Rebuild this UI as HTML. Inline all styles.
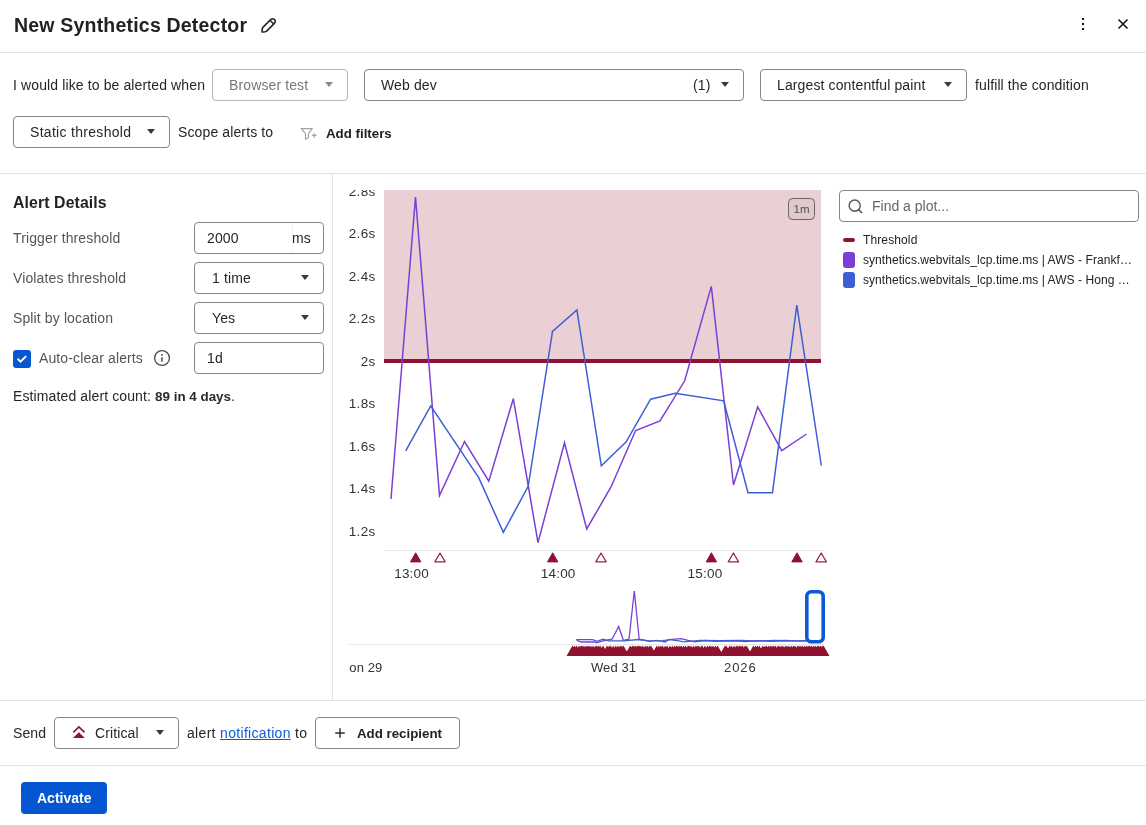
<!DOCTYPE html>
<html><head><meta charset="utf-8">
<style>
*{box-sizing:border-box;margin:0;padding:0}
html,body{width:1146px;height:825px;overflow:hidden;background:#fff}
body{will-change:transform}
body{position:relative;font-family:"Liberation Sans",sans-serif;color:#262626;font-size:14px;letter-spacing:0.12px}
.a{position:absolute;white-space:nowrap;line-height:20px}
.box{position:absolute;border:1px solid #858585;border-radius:4px;background:#fff}
.hr{position:absolute;left:0;width:1146px;height:1px;background:#e3e3e3}
.caret{position:absolute;width:0;height:0;border-left:4px solid transparent;border-right:4px solid transparent;border-top:5px solid #3a3a3a;margin-left:1px;margin-top:-1px}
.lbl{color:#555}
.b{font-weight:bold}
</style></head><body>

<!-- header -->
<div class="a b" style="left:14px;top:13px;font-size:19.5px;line-height:24px;color:#222;letter-spacing:0.2px">New Synthetics Detector</div>
<svg style="position:absolute;left:259px;top:15px" width="20" height="20" viewBox="0 0 20 20">
  <path d="M3.6 12.6 L11.6 4.6 Q13.6 2.9 15.5 4.6 Q17.2 6.5 15.4 8.4 L7.4 16.4 Q5.4 17.4 3.1 17 Q2.7 14.6 3.6 12.6 Z M11 5.3 L14.7 9" fill="none" stroke="#222" stroke-width="1.5" stroke-linejoin="round"/>
</svg>
<div style="position:absolute;left:1082px;top:18px;width:2px;height:2px;background:#111"></div>
<div style="position:absolute;left:1082px;top:23px;width:2px;height:2px;background:#111"></div>
<div style="position:absolute;left:1082px;top:28px;width:2px;height:2px;background:#111"></div>
<svg style="position:absolute;left:1116px;top:17px" width="14" height="14" viewBox="0 0 14 14">
  <path d="M2.5 2.5 L11.5 11.5 M11.5 2.5 L2.5 11.5" stroke="#111" stroke-width="1.5"/>
</svg>
<div class="hr" style="top:52px"></div>

<!-- row 1 -->
<div class="a" style="left:13px;top:75px">I would like to be alerted when</div>
<div class="box" style="left:212px;top:69px;width:136px;height:32px;border-color:#b8b8b8"></div>
<div class="a" style="left:229px;top:75px;color:#787878">Browser test</div>
<div class="caret" style="left:324px;top:83px;border-top-color:#8a8a8a"></div>

<div class="box" style="left:364px;top:69px;width:380px;height:32px"></div>
<div class="a" style="left:381px;top:75px">Web dev</div>
<div class="a" style="left:693px;top:75px">(1)</div>
<div class="caret" style="left:720px;top:83px"></div>

<div class="box" style="left:760px;top:69px;width:207px;height:32px"></div>
<div class="a" style="left:777px;top:75px">Largest contentful paint</div>
<div class="caret" style="left:943px;top:83px"></div>
<div class="a" style="left:975px;top:75px">fulfill the condition</div>

<!-- row 2 -->
<div class="box" style="left:13px;top:116px;width:157px;height:32px"></div>
<div class="a" style="left:30px;top:122px;letter-spacing:0.3px">Static threshold</div>
<div class="caret" style="left:146px;top:130px"></div>
<div class="a" style="left:178px;top:122px">Scope alerts to</div>
<svg style="position:absolute;left:299px;top:126px" width="20" height="16" viewBox="0 0 20 16">
  <path d="M2.3 2.7 H13.3 L9.5 7.7 V11.6 L6.5 13.3 V7.7 Z" fill="none" stroke="#a3a3a3" stroke-width="1.2" stroke-linejoin="round"/>
  <path d="M12.9 9.4 H17.5 M15.2 7.1 V11.7" stroke="#a3a3a3" stroke-width="1.2"/>
</svg>
<div class="a b" style="left:326px;top:124px;color:#222;font-size:13.3px;letter-spacing:0">Add filters</div>
<div class="hr" style="top:173px"></div>

<!-- left panel -->
<div style="position:absolute;left:332px;top:173px;width:1px;height:527px;background:#e3e3e3"></div>
<div class="a b" style="left:13px;top:193px;font-size:15.8px;color:#222">Alert Details</div>

<div class="a lbl" style="left:13px;top:228px">Trigger threshold</div>
<div class="box" style="left:194px;top:222px;width:130px;height:32px"></div>
<div class="a" style="left:207px;top:228px">2000</div>
<div style="position:absolute;left:292px;top:223px;width:1px;height:30px;background:#f3f3f3"></div>
<div class="a" style="left:292px;top:228px">ms</div>

<div class="a lbl" style="left:13px;top:268px">Violates threshold</div>
<div class="box" style="left:194px;top:262px;width:130px;height:32px"></div>
<div class="a" style="left:212px;top:268px">1 time</div>
<div class="caret" style="left:300px;top:276px"></div>

<div class="a lbl" style="left:13px;top:308px">Split by location</div>
<div class="box" style="left:194px;top:302px;width:130px;height:32px"></div>
<div class="a" style="left:212px;top:308px">Yes</div>
<div class="caret" style="left:300px;top:316px"></div>

<div style="position:absolute;left:13px;top:350px;width:18px;height:18px;border-radius:3px;background:#0757d2"></div>
<svg style="position:absolute;left:13px;top:350px" width="18" height="18" viewBox="0 0 18 18"><path d="M4.6 8.8 L7.5 11.6 L13.2 6.1" fill="none" stroke="#fff" stroke-width="2"/></svg>
<div class="a lbl" style="left:39px;top:348px">Auto-clear alerts</div>
<svg style="position:absolute;left:153px;top:349px" width="18" height="18" viewBox="0 0 18 18">
  <circle cx="9" cy="9" r="7.4" fill="none" stroke="#4a4a4a" stroke-width="1.3"/>
  <circle cx="9" cy="5.9" r="0.95" fill="#4a4a4a"/>
  <path d="M9 8.2 V12.7" stroke="#4a4a4a" stroke-width="1.5"/>
</svg>
<div class="box" style="left:194px;top:342px;width:130px;height:32px"></div>
<div class="a" style="left:207px;top:348px">1d</div>

<div class="a" style="left:13px;top:386px">Estimated alert count: <b style="color:#2a2a2a;font-size:13.4px;letter-spacing:0">89 in 4 days</b>.</div>

<!-- legend -->
<div class="box" style="left:839px;top:190px;width:300px;height:32px"></div>
<svg style="position:absolute;left:846px;top:197px" width="18" height="18" viewBox="0 0 18 18">
  <circle cx="8.7" cy="8.6" r="5.6" fill="none" stroke="#555" stroke-width="1.4"/>
  <path d="M12.6 12.6 L16 16" stroke="#555" stroke-width="1.6"/>
</svg>
<div class="a" style="left:872px;top:196px;color:#666;letter-spacing:0">Find a plot...</div>
<div style="position:absolute;left:843px;top:238px;width:12px;height:4px;border-radius:2px;background:#8f1230"></div>
<div class="a" style="left:863px;top:230px;font-size:12px;color:#222">Threshold</div>
<div style="position:absolute;left:843px;top:252px;width:12px;height:16px;border-radius:3px;background:#7b3fd7"></div>
<div class="a" style="left:863px;top:250px;font-size:12px;color:#222;letter-spacing:0.06px">synthetics.webvitals_lcp.time.ms | AWS - Frankf…</div>
<div style="position:absolute;left:843px;top:272px;width:12px;height:16px;border-radius:3px;background:#3e5fd3"></div>
<div class="a" style="left:863px;top:270px;font-size:12px;color:#222;letter-spacing:0.06px">synthetics.webvitals_lcp.time.ms | AWS - Hong …</div>

<!-- chart svg -->
<svg style="position:absolute;left:0;top:0" width="1146" height="825" viewBox="0 0 1146 825">
  <defs><clipPath id="cp"><rect x="333" y="190" width="500" height="400"/></clipPath></defs>
  <rect x="384" y="190" width="437" height="170" fill="#eacfd4"/>
  <rect x="384" y="359" width="437" height="4" fill="#8f1230"/>
  <rect x="384" y="550" width="439" height="1" fill="#e6e6e6"/>
  <g font-family="Liberation Sans" font-size="13.5" letter-spacing="0.35" fill="#333" text-anchor="end" clip-path="url(#cp)">
    <text x="375.6" y="195.6">2.8s</text>
    <text x="375.6" y="238">2.6s</text>
    <text x="375.6" y="280.6">2.4s</text>
    <text x="375.6" y="323">2.2s</text>
    <text x="375.6" y="365.6">2s</text>
    <text x="375.6" y="408">1.8s</text>
    <text x="375.6" y="450.6">1.6s</text>
    <text x="375.6" y="493">1.4s</text>
    <text x="375.6" y="535.6">1.2s</text>
  </g>
  <g font-family="Liberation Sans" font-size="13.5" letter-spacing="0.2" fill="#333" text-anchor="middle">
    <text x="411.6" y="577.7">13:00</text>
    <text x="558.2" y="577.7">14:00</text>
    <text x="705" y="577.7">15:00</text>
  </g>
  <!-- badge -->
  <rect x="788.5" y="198.5" width="26" height="21" rx="4" fill="#e2c7cc" stroke="#666" stroke-width="1"/>
  <text x="801.5" y="213.2" font-family="Liberation Sans" font-size="11.5" fill="#505050" text-anchor="middle">1m</text>
  <!-- series -->
  <polyline fill="none" stroke="#7b3fd7" stroke-width="1.5" stroke-linejoin="miter" points="391,499 415.5,197 439.5,495.6 464.5,441.5 488.8,481.2 513.3,398.7 538,542.6 564.5,442.7 586.7,529 611,487 635.6,430.5 660,421 684.7,380.8 711.3,286.4 733.5,485 757.7,406.9 781.7,450.7 806.6,434"/>
  <polyline fill="none" stroke="#3e5fd3" stroke-width="1.5" stroke-linejoin="miter" points="405.7,450.9 430.7,405.9 478.7,477.6 503.3,532.4 528.2,486.3 552.5,331.5 576.9,310 601.3,465.8 626,442 650.6,399.2 675.3,393.3 723.7,400.8 748,492.8 772.5,492.8 796.8,305.1 821.3,465.5"/>
  <!-- markers -->
  <g fill="#8f1230" stroke="#8f1230" stroke-width="1" stroke-linejoin="round">
    <path d="M410.5 561.9 L415.7 552.8 L420.9 561.9 Z"/>
    <path d="M547.5 561.9 L552.7 552.8 L557.9 561.9 Z"/>
    <path d="M706.2 561.9 L711.4 552.8 L716.6 561.9 Z"/>
    <path d="M791.8 561.9 L797 552.8 L802.2 561.9 Z"/>
  </g>
  <g fill="none" stroke="#9a2540" stroke-width="1.2" stroke-linejoin="round">
    <path d="M434.8 561.9 L440 553 L445.2 561.9 Z"/>
    <path d="M595.8 561.9 L601 553 L606.2 561.9 Z"/>
    <path d="M728.2 561.9 L733.4 553 L738.6 561.9 Z"/>
    <path d="M816 561.9 L821.2 553 L826.4 561.9 Z"/>
  </g>
  <!-- navigator -->
  <rect x="349" y="644" width="475" height="1" fill="#e6e6e6"/>
  <path d="M566.5 656L572.5 645.5L578.5 656ZM568.4 656L574.4 645.5L580.4 656ZM570.5 656L576.5 645.5L582.5 656ZM573.0 656L579.0 645.5L585.0 656ZM575.0 656L581.0 645.5L587.0 656ZM576.1 656L582.1 645.5L588.1 656ZM577.9 656L583.9 645.5L589.9 656ZM580.0 656L586.0 645.5L592.0 656ZM581.6 656L587.6 645.5L593.6 656ZM583.1 656L589.1 645.5L595.1 656ZM584.9 656L590.9 645.5L596.9 656ZM587.0 656L593.0 645.5L599.0 656ZM589.4 656L595.4 645.5L601.4 656ZM590.9 656L596.9 645.5L602.9 656ZM592.6 656L598.6 645.5L604.6 656ZM594.2 656L600.2 645.5L606.2 656ZM597.0 656L603.0 645.5L609.0 656ZM601.0 656L607.0 645.5L613.0 656ZM603.2 656L609.2 645.5L615.2 656ZM604.7 656L610.7 645.5L616.7 656ZM607.3 656L613.3 645.5L619.3 656ZM609.8 656L615.8 645.5L621.8 656ZM612.0 656L618.0 645.5L624.0 656ZM614.1 656L620.1 645.5L626.1 656ZM615.7 656L621.7 645.5L627.7 656ZM617.4 656L623.4 645.5L629.4 656ZM624.2 656L630.2 645.5L636.2 656ZM626.3 656L632.3 645.5L638.3 656ZM627.7 656L633.7 645.5L639.7 656ZM629.4 656L635.4 645.5L641.4 656ZM631.1 656L637.1 645.5L643.1 656ZM632.5 656L638.5 645.5L644.5 656ZM633.1 656L639.1 645.5L645.1 656ZM634.9 656L640.9 645.5L646.9 656ZM636.8 656L642.8 645.5L648.8 656ZM639.2 656L645.2 645.5L651.2 656ZM641.2 656L647.2 645.5L653.2 656ZM643.4 656L649.4 645.5L655.4 656ZM645.0 656L651.0 645.5L657.0 656ZM650.8 656L656.8 645.5L662.8 656ZM653.0 656L659.0 645.5L665.0 656ZM654.9 656L660.9 645.5L666.9 656ZM656.6 656L662.6 645.5L668.6 656ZM659.2 656L665.2 645.5L671.2 656ZM661.2 656L667.2 645.5L673.2 656ZM664.0 656L670.0 645.5L676.0 656ZM666.4 656L672.4 645.5L678.4 656ZM668.7 656L674.7 645.5L680.7 656ZM670.5 656L676.5 645.5L682.5 656ZM672.1 656L678.1 645.5L684.1 656ZM673.9 656L679.9 645.5L685.9 656ZM675.4 656L681.4 645.5L687.4 656ZM677.7 656L683.7 645.5L689.7 656ZM679.6 656L685.6 645.5L691.6 656ZM682.0 656L688.0 645.5L694.0 656ZM683.1 656L689.1 645.5L695.1 656ZM684.9 656L690.9 645.5L696.9 656ZM687.4 656L693.4 645.5L699.4 656ZM689.8 656L695.8 645.5L701.8 656ZM691.2 656L697.2 645.5L703.2 656ZM692.9 656L698.9 645.5L704.9 656ZM695.4 656L701.4 645.5L707.4 656ZM696.1 656L702.1 645.5L708.1 656ZM698.9 656L704.9 645.5L710.9 656ZM701.5 656L707.5 645.5L713.5 656ZM703.4 656L709.4 645.5L715.4 656ZM704.9 656L710.9 645.5L716.9 656ZM707.0 656L713.0 645.5L719.0 656ZM709.4 656L715.4 645.5L721.4 656ZM711.6 656L717.6 645.5L723.6 656ZM719.0 656L725.0 645.5L731.0 656ZM720.3 656L726.3 645.5L732.3 656ZM723.7 656L729.7 645.5L735.7 656ZM725.5 656L731.5 645.5L737.5 656ZM728.1 656L734.1 645.5L740.1 656ZM730.4 656L736.4 645.5L742.4 656ZM731.9 656L737.9 645.5L743.9 656ZM733.6 656L739.6 645.5L745.6 656ZM735.1 656L741.1 645.5L747.1 656ZM736.6 656L742.6 645.5L748.6 656ZM739.0 656L745.0 645.5L751.0 656ZM740.6 656L746.6 645.5L752.6 656ZM747.4 656L753.4 645.5L759.4 656ZM749.5 656L755.5 645.5L761.5 656ZM751.4 656L757.4 645.5L763.4 656ZM753.3 656L759.3 645.5L765.3 656ZM756.7 656L762.7 645.5L768.7 656ZM759.0 656L765.0 645.5L771.0 656ZM760.5 656L766.5 645.5L772.5 656ZM762.7 656L768.7 645.5L774.7 656ZM764.3 656L770.3 645.5L776.3 656ZM766.2 656L772.2 645.5L778.2 656ZM767.8 656L773.8 645.5L779.8 656ZM769.5 656L775.5 645.5L781.5 656ZM772.1 656L778.1 645.5L784.1 656ZM772.9 656L778.9 645.5L784.9 656ZM775.1 656L781.1 645.5L787.1 656ZM776.9 656L782.9 645.5L788.9 656ZM779.4 656L785.4 645.5L791.4 656ZM781.0 656L787.0 645.5L793.0 656ZM782.9 656L788.9 645.5L794.9 656ZM785.3 656L791.3 645.5L797.3 656ZM787.5 656L793.5 645.5L799.5 656ZM789.0 656L795.0 645.5L801.0 656ZM791.6 656L797.6 645.5L803.6 656ZM793.1 656L799.1 645.5L805.1 656ZM794.9 656L800.9 645.5L806.9 656ZM796.6 656L802.6 645.5L808.6 656ZM798.9 656L804.9 645.5L810.9 656ZM800.7 656L806.7 645.5L812.7 656ZM802.4 656L808.4 645.5L814.4 656ZM803.9 656L809.9 645.5L815.9 656ZM805.4 656L811.4 645.5L817.4 656ZM807.5 656L813.5 645.5L819.5 656ZM809.2 656L815.2 645.5L821.2 656ZM811.4 656L817.4 645.5L823.4 656ZM812.7 656L818.7 645.5L824.7 656ZM814.5 656L820.5 645.5L826.5 656ZM816.4 656L822.4 645.5L828.4 656ZM817.5 656L823.5 645.5L829.5 656Z" fill="#8f1230"/>
  <polyline fill="none" stroke="#7b3fd7" stroke-width="1.3" points="576.8,640.3 581.3,642 593.8,642 597.2,642.6 602.9,640.9 612,639.2 618.7,626.5 623.3,640.3 629,639.2 634.3,591 639.2,639.2 649.4,641.4 656.2,640.3 665.3,642 668.7,639.7 681.2,638.6 688,640.3 694.8,641.8 705,640.5 715,641.3 735,640.8 745,641.5 760,640.6 770,641.4 785,640.5 800,641.2 807,640.8"/>
  <polyline fill="none" stroke="#3e5fd3" stroke-width="1.3" points="576.2,639.7 592.7,639.7 597.2,641.4 602.9,639.2 608.6,640.9 624.5,640.9 638,639.5 649.4,640.9 663,640.6 669.8,639.7 678.9,640.9 683.4,641.8 700,640.3 720,640.6 740,640.4 755,641 775,640.5 795,640.8 807,640.6"/>
  <rect x="806.8" y="591.8" width="16.4" height="50" rx="4.5" fill="none" stroke="#0a5ad6" stroke-width="3.6"/>
  <g font-family="Liberation Sans" font-size="13" fill="#333">
    <text x="349.3" y="672">on 29</text>
    <text x="590.9" y="672">Wed 31</text>
    <text x="724" y="672" letter-spacing="0.9">2026</text>
  </g>
</svg>

<!-- bottom -->
<div class="hr" style="top:700px"></div>
<div class="a" style="left:13px;top:723px">Send</div>
<div class="box" style="left:54px;top:717px;width:125px;height:32px"></div>
<svg style="position:absolute;left:71px;top:725px" width="16" height="16" viewBox="0 0 16 16">
  <path d="M2.3 7.3 L7.9 1.9 L13.5 7.3" fill="none" stroke="#8f1230" stroke-width="1.6"/>
  <path d="M2 13 L7.9 7.2 L13.8 13 Z" fill="#8f1230"/>
</svg>
<div class="a" style="left:95px;top:723px">Critical</div>
<div class="caret" style="left:155px;top:731px"></div>
<div class="a" style="left:187px;top:723px;letter-spacing:0.32px">alert <span style="color:#0b5cd7;text-decoration:underline">notification</span> to</div>
<div class="box" style="left:315px;top:717px;width:145px;height:32px"></div>
<svg style="position:absolute;left:333px;top:726px" width="14" height="14" viewBox="0 0 14 14"><path d="M7 2.2 V11.8 M2.2 7 H11.8" stroke="#2a2a2a" stroke-width="1.4"/></svg>
<div class="a b" style="left:357px;top:724px;color:#222;font-size:13.3px;letter-spacing:0">Add recipient</div>
<div class="hr" style="top:765px"></div>
<div style="position:absolute;left:21px;top:782px;width:86px;height:32px;border-radius:4px;background:#0556d2"></div>
<div class="a b" style="left:37px;top:788px;color:#fff;letter-spacing:0">Activate</div>

</body></html>
